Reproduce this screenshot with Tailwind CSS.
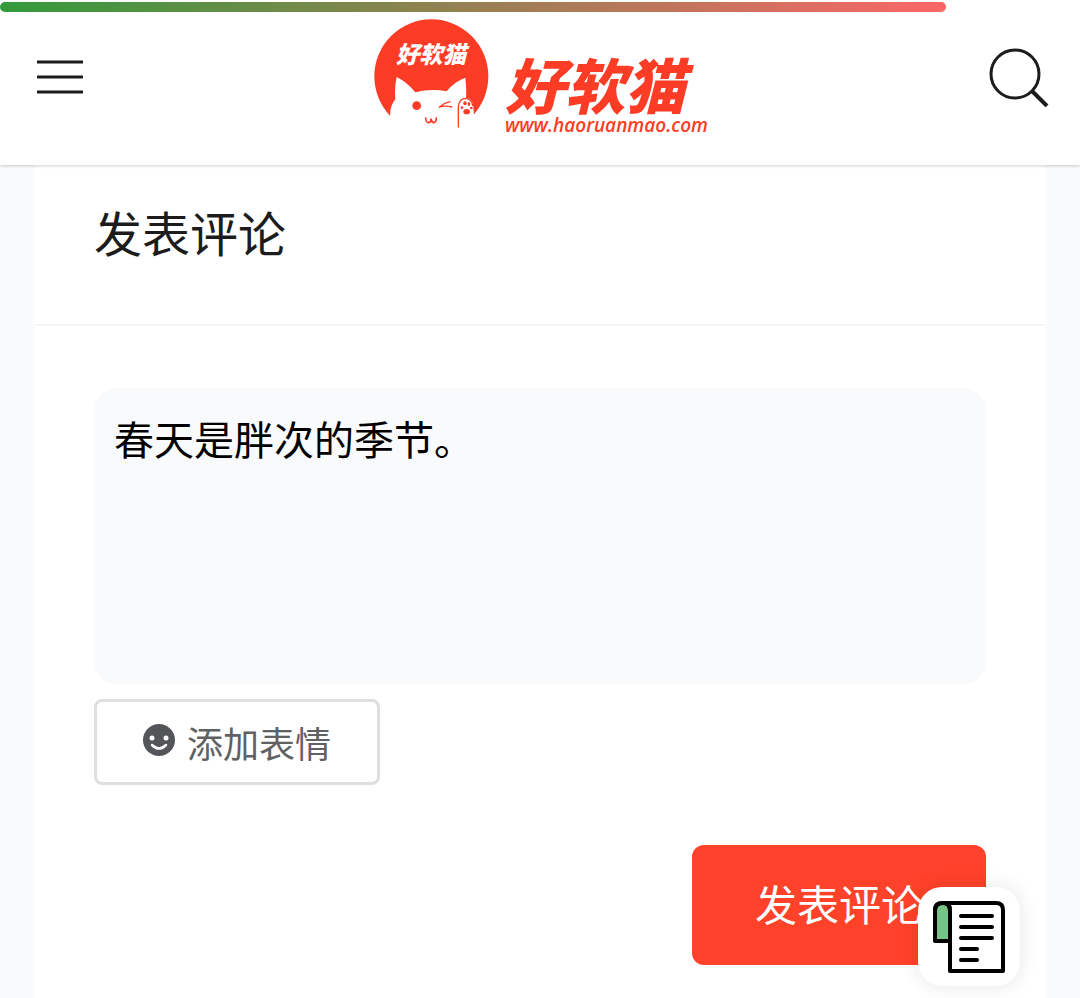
<!DOCTYPE html>
<html lang="zh-CN">
<head>
  <meta charset="UTF-8">
  <meta name="viewport" content="width=device-width, initial-scale=1.0">
  <title>好软猫 - 发表评论</title>
  <script src="https://cdn.jsdelivr.net/npm/@tailwindcss/browser@4"></script>
</head>
<body class="min-h-screen flex flex-col bg-[#f8fafc] text-[#1c1c1c] font-['Noto_Sans_CJK_SC',sans-serif]">

  <!-- Reading progress -->
  <div class="fixed top-0 inset-x-0 z-30 pt-[2px]">
    <div class="h-[10px] rounded-full bg-linear-to-r/srgb from-[#339a3c] to-[#fb6668]" style="width: 87.6%"></div>
  </div>

  <!-- Header -->
  <header class="relative z-10 h-[165px] pb-3 pl-[37px] pr-[31px] grid grid-cols-[1fr_auto_1fr] items-center bg-white shadow-[0_1px_3px_rgba(0,0,0,0.2)]">
    <button type="button" aria-label="菜单" class="justify-self-start">
      <svg class="w-[46px] h-9" viewBox="0 0 46 36" stroke="#1c1c1c" stroke-width="3">
        <path d="M0 3h46M0 18h46M0 33h46" />
      </svg>
    </button>

    <a href="#" class="flex items-center gap-4 pr-1 text-[#fd3c25]">
      <svg class="w-[115px] h-[115px]" viewBox="26 26 345 345" aria-hidden="true">
        <circle cx="198" cy="198" r="171" fill="#fd3c25" />
        <text x="92" y="158" fill="#fff" font-size="70" font-weight="900" font-style="italic" font-family="Noto Sans CJK SC, sans-serif">好软猫</text>
        <!-- cat -->
        <path fill="#fff" d="M20 380V318H75Q72 290 90 266Q87 230 94 200Q125 215 150 246Q197 234 244 243Q265 215 300 202Q304 232 302 262Q324 264 324 290L326 315H380V380Z" />
        <circle cx="154" cy="286" r="13" fill="#fd3c25" />
        <g fill="none" stroke="#fd3c25" stroke-linecap="round" stroke-linejoin="round">
          <path stroke-width="4" d="M254 274Q236 278 222 290Q240 285 259 290" />
          <path stroke-width="5" d="M181 323Q182 337 190 337Q197 336 197 326Q199 337 206 337Q213 334 213 323" />
          <path stroke-width="4" d="M279 350V290Q281 264 302 264Q320 266 322 285" />
        </g>
        <g fill="#fd3c25">
          <ellipse cx="304" cy="304" rx="10" ry="8" />
          <ellipse cx="299" cy="279" rx="5" ry="6" />
          <ellipse cx="311" cy="281" rx="4" ry="6" />
          <circle cx="290" cy="292" r="4" />
          <circle cx="318" cy="293" r="4" />
        </g>
      </svg>
      <span class="flex flex-col pt-10">
        <span class="text-6xl leading-14 font-black italic">好软猫</span>
        <span class="text-[19px] leading-7 font-semibold italic font-['Open_Sans',sans-serif]">www.haoruanmao.com</span>
      </span>
    </a>

    <button type="button" aria-label="搜索" class="justify-self-end">
      <svg class="w-[60px] h-[60px]" viewBox="0 0 60 60" fill="none" stroke="#1c1c1c" stroke-width="3">
        <circle cx="26" cy="27" r="24" />
        <path d="M43 44l15 15" stroke-width="4" />
      </svg>
    </button>
  </header>

  <!-- Comment card -->
  <main class="flex-1 mx-[34px] bg-white">
    <div class="pt-[30px] pb-[57px] px-[60px] border-b-2 border-[#f5f6f7]">
      <h1 id="comment-title" class="text-5xl leading-[72px]">发表评论</h1>
    </div>

    <form class="px-[60px] pt-[62px]">
      <textarea aria-labelledby="comment-title" class="block w-full h-[297px] px-5 py-5 rounded-3xl bg-[#f8fafc] text-[40px] leading-[60px] text-black resize-none outline-none">春天是胖次的季节。</textarea>

      <button type="button" class="mt-[14px] h-[86px] px-[46px] flex items-center gap-3 rounded-lg border-3 border-[#dedfe0] text-4xl text-[#606163]">
        <svg class="w-8 h-8 mb-1" viewBox="0 0 32 32" aria-hidden="true">
          <circle cx="16" cy="16" r="16" fill="#545558" />
          <circle cx="9" cy="14" r="2.5" fill="#fff" />
          <circle cx="23" cy="14" r="2.5" fill="#fff" />
          <path d="M9 21q7 7 14 0" fill="none" stroke="#fff" stroke-width="2.5" stroke-linecap="round" />
        </svg>
        添加表情
      </button>

      <div class="mt-[60px] flex justify-end">
        <button type="submit" class="h-[120px] px-[63px] pb-1.5 rounded-xl bg-[#ff4229] text-[42px] text-white">发表评论</button>
      </div>
    </form>
  </main>

  <!-- Floating contents button -->
  <button type="button" aria-label="目录" class="fixed right-[60px] bottom-3 z-20 w-[102px] h-[99px] flex items-center justify-center rounded-3xl bg-white shadow-[0_0_20px_rgba(0,0,0,0.1)]">
    <svg class="w-[72px] h-[72px]" viewBox="0 0 72 72" fill="none" stroke="#000" stroke-width="4" stroke-linecap="round" stroke-linejoin="round">
      <path d="M9 2h54q7 0 7 7v61H17V9q0-7-8-7-7 0-7 7v30h15" />
      <path fill="#75c586" d="M2 40V10q0-8 8-8 7 0 7 8v30z" />
      <path d="M28 15h31M28 26h31M28 37h31M28 48h16M28 59h16" />
    </svg>
  </button>

</body>
</html>
